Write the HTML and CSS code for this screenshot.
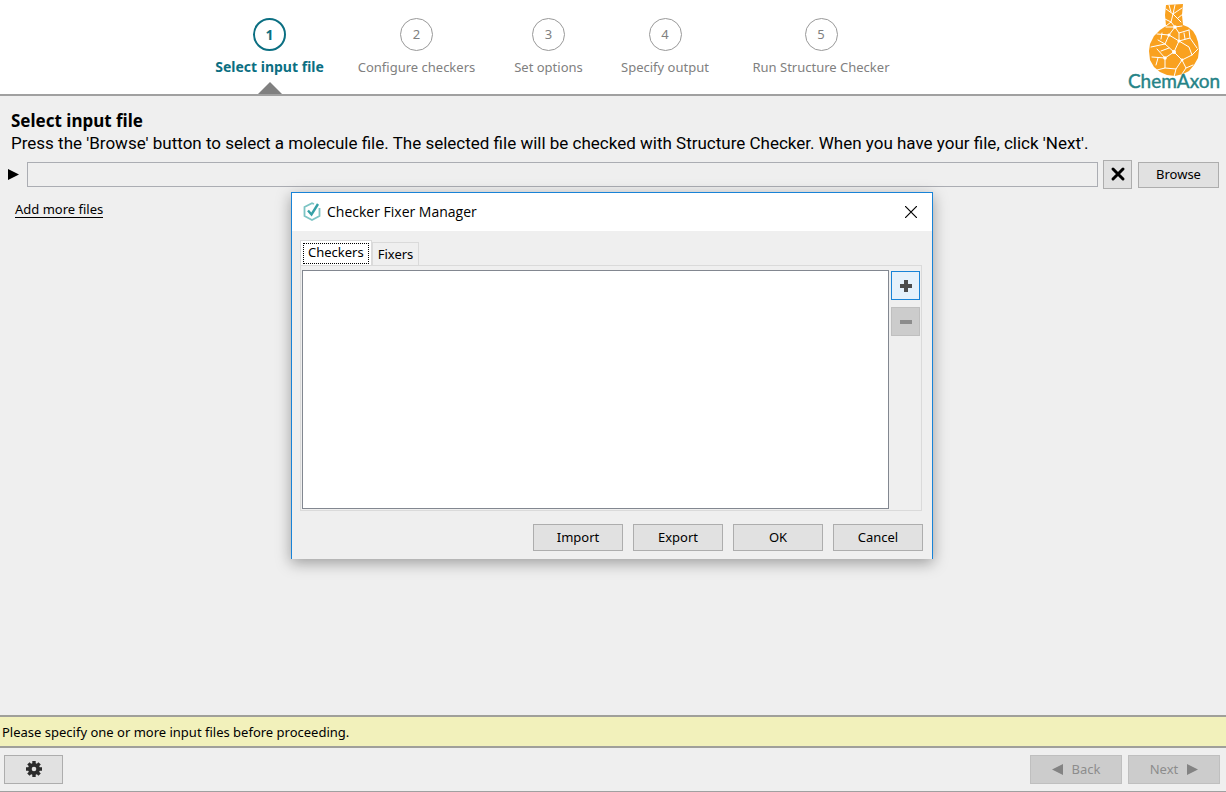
FILE: index.html
```html
<!DOCTYPE html>
<html lang="en">
<head>
  <meta charset="UTF-8" />
  <meta name="viewport" content="width=device-width, initial-scale=1" />
  <title>Structure Checker</title>
  <link rel="stylesheet" href="styles.css">
</head>
<body>

<header class="header">
  <ol class="steps">
    <li class="step active"><span class="circle">1</span><span class="label">Select input file</span></li>
    <li class="step"><span class="circle">2</span><span class="label">Configure checkers</span></li>
    <li class="step"><span class="circle">3</span><span class="label">Set options</span></li>
    <li class="step"><span class="circle">4</span><span class="label">Specify output</span></li>
    <li class="step"><span class="circle">5</span><span class="label">Run Structure Checker</span></li>
  </ol>
  <svg class="logo" width="100" height="92" viewBox="0 0 100 92">
    <path fill="#f9a11f" d="M42 5l17-1-1 11 1 10 5 2 5 4 3 5 2 6 1 8-1 8-4 7-5 6-6 3-8 2-8-1-7-3-6-5-4-7-1-9 1-7 4-8 6-6 6-4-1-11z"/>
    <g fill="none" stroke="#fff" stroke-width="1" stroke-linecap="round" stroke-linejoin="round">
      <path d="M42 9l7 5 9-6M49 14l-2 8-5 4M49 14l8 8M51 5l-2 9M41 19l6 3 4 5 7-1M42 27l9 0 4 6 10-3M54 18l5-4M45 5l2 7"/>
      <path d="M51 27l-6 8-12-1M45 35l-4 9-14 3M45 35l10 6 0-8M55 41l11-3 7 10M66 38l-1-8M55 41l-5 11-9-8M50 52l-9 6-13-1M41 58l-8-9M41 58l0 10-8 2M50 52l8 8-6 9-11-1M58 60l10-5 6-6M68 55l-3-8-10-6M58 60l4 8 7-3M52 69l-2 8M41 44l-7-4M62 68l-4 6M38 33l-1 6M45 48l-8 3M34 58l-2 7M60 33l1 6"/>
    </g>
    <g fill="#fff"><circle cx="45" cy="35" r="1.600"/><circle cx="55" cy="41" r="1.600"/><circle cx="50" cy="52" r="2"/><circle cx="41" cy="58" r="1.800"/><circle cx="58" cy="60" r="1.400"/><circle cx="51" cy="27" r="1.800"/></g>
    <text x="50" y="88" text-anchor="middle" class="logo-text">ChemAxon</text>
  </svg>
</header>

<main class="content">
  <h1>Select input file</h1>
  <p class="intro">Press the 'Browse' button to select a molecule file. The selected file will be checked with Structure Checker. When you have your file, click 'Next'.</p>
  <div class="file-row">
    <svg class="marker" width="11" height="11" viewBox="0 0 11 11"><path d="M0 0l11 5.500-11 5.500z"/></svg>
    <input class="file-input" type="text" aria-label="Input file">
    <button class="btn clear-btn" aria-label="Clear">
      <svg width="16" height="16" viewBox="0 0 16 16"><path d="M3 3l10 10M13 3L3 13" stroke="#000" stroke-width="3" stroke-linecap="round"/></svg>
    </button>
    <button class="btn browse-btn">Browse</button>
  </div>
  <a class="add-link" href="#">Add more files</a>
</main>

<div class="status">Please specify one or more input files before proceeding.</div>

<footer class="footer">
  <button class="btn settings-btn" aria-label="Settings">
    <svg width="18" height="18" viewBox="0 0 18 18">
      <g stroke="#2b2b2b" stroke-width="3.400">
        <path d="M9 1v16M1 9h16M3.400 3.400l11.200 11.200M14.600 3.400L3.400 14.600"/>
      </g>
      <circle cx="9" cy="9" r="6" fill="#2b2b2b"/>
      <circle cx="9" cy="9" r="2.300" fill="#e1e1e1"/>
    </svg>
  </button>
  <div class="nav">
    <button class="btn nav-btn" disabled><svg width="11" height="11" viewBox="0 0 11 11"><path fill="#838383" d="M11 0v11L0 5.500z"/></svg>Back</button>
    <button class="btn nav-btn" disabled>Next<svg width="11" height="11" viewBox="0 0 11 11"><path fill="#838383" d="M0 0l11 5.500L0 11z"/></svg></button>
  </div>
</footer>

<!-- Manager dialog -->
<section class="dialog" role="dialog" aria-labelledby="dialogTitle">
  <div class="titlebar">
    <svg width="18" height="20" viewBox="0 0 18 20" fill="none" stroke="#7cc4c4">
      <path d="M11 2L9 1.200 1.500 5v9L9 18l7.500-4V6" stroke-width="1.800"/>
      <path d="M5 8.500l3.500 4L15 2" stroke="#36a0a6" stroke-width="2.400"/>
    </svg>
    <h2 id="dialogTitle">Checker Fixer Manager</h2>
    <button class="close-btn" aria-label="Close">
      <svg width="12" height="12" viewBox="0 0 12 12"><path d="M0 0l12 12M12 0L0 12" stroke="#000" stroke-width="1.200"/></svg>
    </button>
  </div>
  <div class="dialog-body">
    <div class="tabs" role="tablist">
      <button class="tab selected" role="tab" aria-selected="true"><span>Checkers</span></button>
      <button class="tab" role="tab">Fixers</button>
    </div>
    <div class="panel" role="tabpanel">
      <div class="list"></div>
      <div class="tools">
        <button class="btn tool-btn focused" aria-label="Add"><svg width="12" height="12" viewBox="0 0 12 12"><path d="M6 0v12M0 6h12" stroke="#4c4c4c" stroke-width="4"/></svg></button>
        <button class="btn tool-btn" aria-label="Remove" disabled><svg width="12" height="12" viewBox="0 0 12 12"><path d="M0 6h12" stroke="#8c8c8c" stroke-width="4"/></svg></button>
      </div>
    </div>
    <div class="actions">
      <button class="btn">Import</button>
      <button class="btn">Export</button>
      <button class="btn">OK</button>
      <button class="btn">Cancel</button>
    </div>
  </div>
</section>

</body>
</html>
```
FILE: styles.css
```css
* {
  box-sizing: border-box;
}

body {
  margin: 0;
  min-height: 100vh;
  display: flex;
  flex-direction: column;
  position: relative;
  background: #efefef;
  color: #000;
  font-family: 'Noto Sans', sans-serif;
  font-size: 13px;
  line-height: 18px;
}

button,
input {
  font: inherit;
  color: inherit;
}

svg {
  display: block;
  flex: none;
}

h1,
h2,
p,
ol {
  margin: 0;
  padding: 0;
}

/* Header */
.header {
  display: flex;
  justify-content: space-between;
  background: #fff;
  border-bottom: 2px solid #a0a0a0;
}

.steps {
  display: grid;
  grid-template-columns: 147px 147px 117px 116px 196px;
  padding-left: 196px;
  list-style: none;
  color: #808080;
}

.step {
  display: flex;
  flex-direction: column;
  align-items: center;
  padding-top: 18px;
  white-space: nowrap;
}

.circle {
  width: 33px;
  height: 33px;
  border: 1px solid #999;
  border-radius: 50%;
  line-height: 31px;
  text-align: center;
}

.label {
  margin-top: 7px;
}

.active {
  color: #0b6f82;
  font-size: 14px;
  font-weight: bold;
}

.active .circle {
  border: 2px solid #0b6f82;
  line-height: 29px;
}

.active::after {
  content: "";
  margin-top: auto;
  border: 12px solid transparent;
  border-top: 0;
  border-bottom-color: #808080;
}

.logo {
  margin: 0 2px 2px 0;
}

.logo-text {
  font-family: Lato, sans-serif;
  font-size: 19px;
  fill: #258387;
  stroke: #258387;
  stroke-width: 0.4px;
}

/* Content */
.content {
  flex: 1;
  padding: 14px 7px;
}

h1 {
  margin-left: 4px;
  font-size: 17px;
  line-height: 22px;
}

.intro {
  margin-left: 4px;
  font-family: Roboto, 'Noto Sans', sans-serif;
  font-size: 17px;
  line-height: 22px;
}

.file-row {
  display: flex;
  align-items: center;
  margin-top: 6px;
}

.marker {
  margin: 0 8px 0 1px;
}

.file-input {
  flex: 1;
  height: 25px;
  margin-right: 5px;
  border: 1px solid #abadb3;
  background: #efefef;
}

.btn {
  display: flex;
  align-items: center;
  justify-content: center;
  padding: 0 0 1px;
  border: 1px solid #adadad;
  background: #e1e1e1;
}

.btn:disabled {
  border-color: #bfbfbf;
  background: #ccc;
  color: #8c8c8c;
}

.clear-btn {
  width: 29px;
  height: 29px;
  margin-right: 6px;
}

.browse-btn {
  width: 81px;
  height: 26px;
}

.add-link {
  display: inline-block;
  margin: 12px 0 0 8px;
  border-bottom: 1px solid #000;
  color: #000;
  text-decoration: none;
  line-height: 16px;
}

/* Bottom bars */
.status {
  padding: 6px 2px 5px;
  border-top: 2px solid #a0a09a;
  border-bottom: 2px solid #a0a09a;
  background: #f2f1bb;
}

.footer {
  display: flex;
  justify-content: space-between;
  padding: 7px 6px 7px 4px;
  border-bottom: 1px solid #a0a0a0;
}

.settings-btn {
  width: 59px;
  height: 29px;
}

.nav {
  display: flex;
  gap: 6px;
}

.nav-btn {
  width: 92px;
  height: 29px;
  gap: 9px;
}

/* Dialog */
.dialog {
  position: absolute;
  top: 192px;
  left: calc(50% - 322px);
  width: 642px;
  border: 1px solid #1883d7;
  border-bottom: 0;
  background: #efefef;
  box-shadow: 0 4px 14px rgba(0, 0, 0, 0.35);
}

.titlebar {
  display: flex;
  align-items: center;
  height: 38px;
  padding: 0 15px 0 11px;
  background: #fff;
}

.titlebar h2 {
  flex: 1;
  margin-left: 6px;
  font-family: 'Open Sans', sans-serif;
  font-size: 14px;
  font-weight: normal;
}

.close-btn {
  padding: 0;
  border: 0;
  background: none;
}

.dialog-body {
  padding: 9px 9px 8px 8px;
}

.tabs {
  display: flex;
  align-items: flex-end;
}

.tab {
  height: 23px;
  padding: 0 5px;
  border: 1px solid #dadada;
  border-bottom: 0;
  background: #efefef;
}

.tab.selected {
  height: 25px;
  padding: 2px;
  background: #fff;
}

.tab.selected span {
  display: block;
  height: 21px;
  padding: 0 4px;
  border: 1px dotted #000;
  line-height: 17px;
}

.panel {
  display: flex;
  margin-right: 1px;
  border: 1px solid #dadada;
  padding: 4px 1px 1px;
}

.list {
  flex: 1;
  height: 239px;
  border: 1px solid #828790;
  background: #fff;
}

.tools {
  display: flex;
  flex-direction: column;
  gap: 7px;
  padding: 1px 0 0 2px;
}

.tool-btn {
  width: 29px;
  height: 29px;
  padding: 0;
}

.tool-btn.focused {
  border: 1px solid #1883d7;
  background: #e5f1fb;
}

.actions {
  display: flex;
  justify-content: flex-end;
  gap: 10px;
  margin-top: 13px;
}

.actions .btn {
  width: 90px;
  height: 27px;
}
```
